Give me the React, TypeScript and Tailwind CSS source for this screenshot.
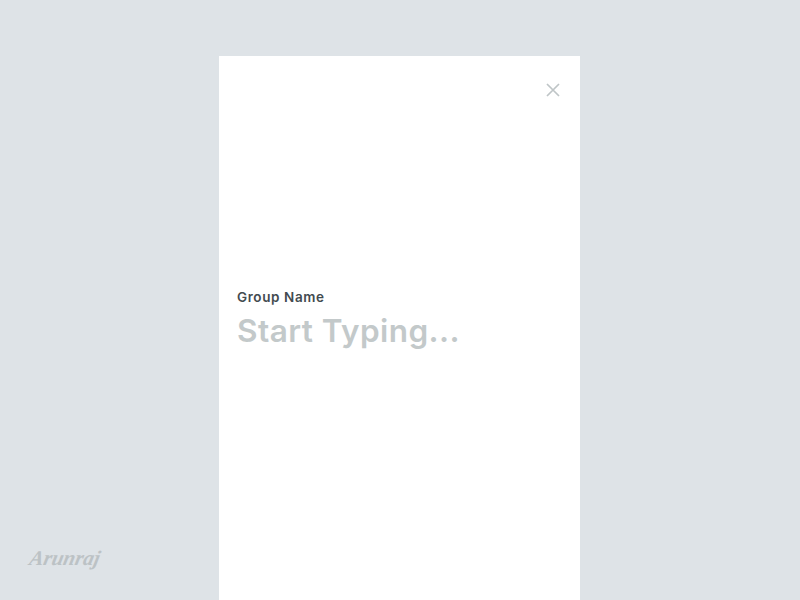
import React from 'react';

export default function App() {
  return (
    <div className="relative h-[600px] w-[800px] overflow-hidden bg-[#dee3e7] font-['Inter',sans-serif]">
      <div className="ml-[219px] flex h-full w-[361px] flex-col pt-[56px]">
        <div className="flex flex-1 flex-col bg-white pl-[18px] pr-[19px] pt-[26px]">
          <div className="flex justify-end">
            <svg width="16" height="16" viewBox="0 0 16 16" fill="none" stroke="#bfc5c7" strokeWidth="1.7">
              <path d="M2 2 L14 14 M14 2 L2 14" />
            </svg>
          </div>
          <div className="mt-[191px] text-[13.5px] font-semibold leading-[17px] tracking-[0.6px] text-[#434b50]">Group Name</div>
          <div className="mt-[4px] text-[31.5px] font-semibold leading-[42px] tracking-[0.45px] text-[#c3c9ca]">Start Typing...</div>
        </div>
      </div>
      <div className="absolute left-[30px] top-[545px] -skew-x-12 font-['Liberation_Serif',serif] text-[21px] font-bold italic leading-[26px] text-[#bcc2c5]">Arunraj</div>
    </div>
  );
}
